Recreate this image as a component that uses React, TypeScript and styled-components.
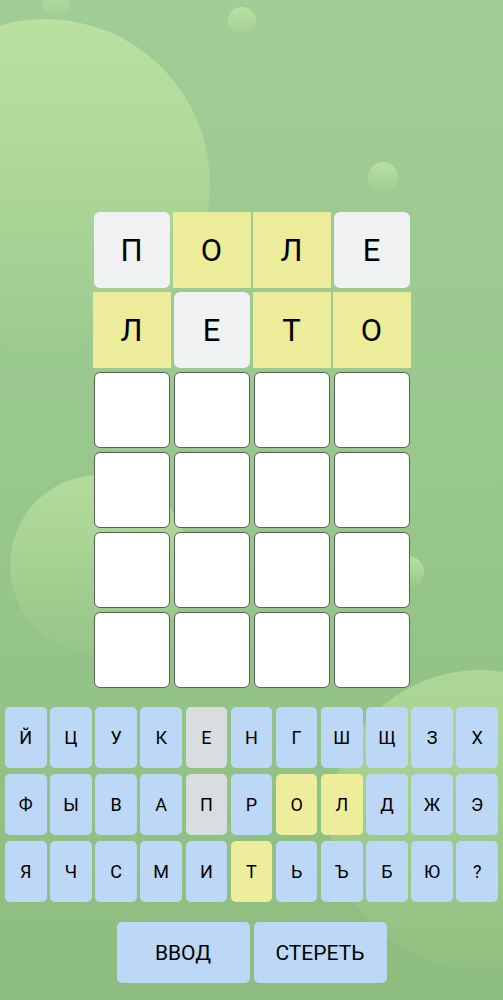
import React from "react";
import styled, { createGlobalStyle } from "styled-components";

const Global = createGlobalStyle`
  html, body { margin: 0; padding: 0; }
  body { font-family: Roboto, "Noto Sans", "Liberation Sans", sans-serif; }
  * { box-sizing: border-box; }
`;

const Page = styled.div`
  position: relative;
  width: 503px;
  height: 1000px;
  overflow: hidden;
  background: linear-gradient(180deg, #a1cd96 0%, #99c88d 45%, #8dbd7f 100%);
`;

const Bubble = styled.div<{ $x: number; $y: number; $r: number; $o?: number }>`
  position: absolute;
  left: ${(p) => p.$x - p.$r}px;
  top: ${(p) => p.$y - p.$r}px;
  width: ${(p) => p.$r * 2}px;
  height: ${(p) => p.$r * 2}px;
  border-radius: 50%;
  background: linear-gradient(180deg, rgba(190, 228, 160, ${(p) => p.$o ?? 0.85}) 0%, rgba(170, 214, 145, 0.1) 100%);
  pointer-events: none;
`;

const Content = styled.div`
  position: relative;
  display: flex;
  flex-direction: column;
  align-items: center;
  padding-top: 212px;
`;

const Board = styled.div`
  display: grid;
  grid-template-columns: repeat(4, 76px);
  grid-auto-rows: 76px;
  gap: 4px;
`;

type TileKind = "empty" | "gray" | "yellow";

const Tile = styled.div<{ $kind: TileKind }>`
  display: flex;
  align-items: center;
  justify-content: center;
  font-size: 31px;
  color: #000;
  border-radius: ${(p) => (p.$kind === "yellow" ? "0" : "6px")};
  margin: ${(p) => (p.$kind === "yellow" ? "0 -1px" : "0")};
  background: ${(p) =>
    p.$kind === "yellow" ? "#ecec9a" : p.$kind === "gray" ? "#eff1f3" : "#ffffff"};
  border: ${(p) => (p.$kind === "empty" ? "1.6px solid #565e55" : "none")};
`;

const Keyboard = styled.div`
  width: 503px;
  padding: 19px 5px 0;
  display: flex;
  flex-direction: column;
  gap: 6px;
`;

const KeyRow = styled.div`
  display: flex;
  gap: 3.6px;
`;

type KeyKind = "blue" | "gray" | "yellow";

const Key = styled.div<{ $kind: KeyKind }>`
  flex: 1;
  height: 61px;
  border-radius: 5px;
  display: flex;
  align-items: center;
  justify-content: center;
  font-size: 18px;
  color: #000;
  background: ${(p) =>
    p.$kind === "yellow" ? "#eded9b" : p.$kind === "gray" ? "#d9dde0" : "#bdd7f6"};
`;

const Actions = styled.div`
  display: flex;
  justify-content: center;
  gap: 4px;
  margin-top: 14px;
`;

const ActionButton = styled.div`
  width: 133px;
  height: 61px;
  border-radius: 5px;
  background: #bdd7f6;
  display: flex;
  align-items: center;
  justify-content: center;
  font-size: 21px;
  color: #000;
`;

const rows: { ch: string; k: TileKind }[][] = [
  [
    { ch: "П", k: "gray" },
    { ch: "О", k: "yellow" },
    { ch: "Л", k: "yellow" },
    { ch: "Е", k: "gray" },
  ],
  [
    { ch: "Л", k: "yellow" },
    { ch: "Е", k: "gray" },
    { ch: "Т", k: "yellow" },
    { ch: "О", k: "yellow" },
  ],
];

const keyRows = [
  "ЙЦУКЕНГШЩЗХ",
  "ФЫВАПРОЛДЖЭ",
  "ЯЧСМИТЬЪБЮ?",
];

const keyKind = (c: string): KeyKind => {
  if ("ОЛТ".includes(c)) return "yellow";
  if ("ЕП".includes(c)) return "gray";
  return "blue";
};

export default function App() {
  const tiles: { ch: string; k: TileKind }[] = [];
  rows.forEach((r) => tiles.push(...r));
  for (let i = 0; i < 16; i++) tiles.push({ ch: "", k: "empty" });

  return (
    <>
      <Global />
      <Page>
        <Bubble $x={45} $y={184} $r={165} />
        <Bubble $x={56} $y={4} $r={13} $o={0.7} />
        <Bubble $x={242} $y={21} $r={14} />
        <Bubble $x={383} $y={177} $r={15} />
        <Bubble $x={100} $y={565} $r={90} $o={0.7} />
        <Bubble $x={408} $y={572} $r={16} />
        <Bubble $x={480} $y={820} $r={150} $o={0.6} />
        <Content>
          <Board>
            {tiles.map((t, i) => (
              <Tile key={i} $kind={t.k}>
                {t.ch}
              </Tile>
            ))}
          </Board>
          <Keyboard>
            {keyRows.map((r, i) => (
              <KeyRow key={i}>
                {r.split("").map((c) => (
                  <Key key={c} $kind={keyKind(c)}>
                    {c}
                  </Key>
                ))}
              </KeyRow>
            ))}
            <Actions>
              <ActionButton>ВВОД</ActionButton>
              <ActionButton>СТЕРЕТЬ</ActionButton>
            </Actions>
          </Keyboard>
        </Content>
      </Page>
    </>
  );
}
